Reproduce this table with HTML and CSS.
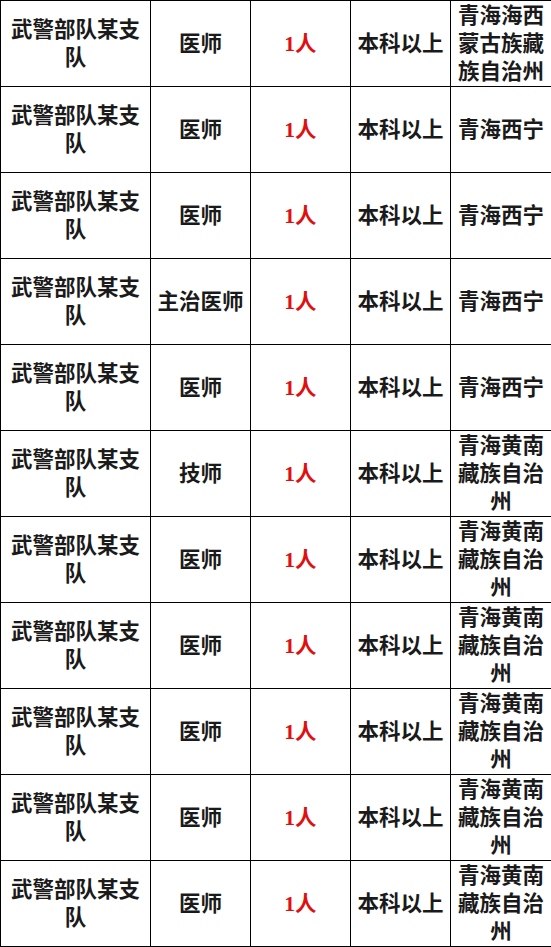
FILE: index.html
```html
<!DOCTYPE html>
<html lang="zh">
<head>
<meta charset="utf-8">
<link rel="stylesheet" href="styles.css">
</head>
<body>
<table class="jobs">
<colgroup><col class="c-unit"><col class="c-post"><col class="c-num"><col class="c-edu"><col class="c-loc"></colgroup>
<tbody>
<tr><td>武警部队某支队</td><td>医师</td><td class="num">1人</td><td>本科以上</td><td>青海海西蒙古族藏族自治州</td></tr>
<tr><td>武警部队某支队</td><td>医师</td><td class="num">1人</td><td>本科以上</td><td>青海西宁</td></tr>
<tr><td>武警部队某支队</td><td>医师</td><td class="num">1人</td><td>本科以上</td><td>青海西宁</td></tr>
<tr><td>武警部队某支队</td><td>主治医师</td><td class="num">1人</td><td>本科以上</td><td>青海西宁</td></tr>
<tr><td>武警部队某支队</td><td>医师</td><td class="num">1人</td><td>本科以上</td><td>青海西宁</td></tr>
<tr><td>武警部队某支队</td><td>技师</td><td class="num">1人</td><td>本科以上</td><td>青海黄南藏族自治州</td></tr>
<tr><td>武警部队某支队</td><td>医师</td><td class="num">1人</td><td>本科以上</td><td>青海黄南藏族自治州</td></tr>
<tr><td>武警部队某支队</td><td>医师</td><td class="num">1人</td><td>本科以上</td><td>青海黄南藏族自治州</td></tr>
<tr><td>武警部队某支队</td><td>医师</td><td class="num">1人</td><td>本科以上</td><td>青海黄南藏族自治州</td></tr>
<tr><td>武警部队某支队</td><td>医师</td><td class="num">1人</td><td>本科以上</td><td>青海黄南藏族自治州</td></tr>
<tr><td>武警部队某支队</td><td>医师</td><td class="num">1人</td><td>本科以上</td><td>青海黄南藏族自治州</td></tr>
</tbody>
</table>
</body>
</html>
```
FILE: styles.css
```css
html, body {
  margin: 0;
  padding: 0;
  background: #fff;
}
.jobs {
  border-collapse: collapse;
  table-layout: fixed;
  width: 551px;
  font-family: "Liberation Serif", "Noto Sans CJK SC", serif;
  font-weight: bold;
  font-size: 21.5px;
  line-height: 28px;
  color: #1a1a1a;
}
.c-unit { width: 150px; }
.c-post { width: 100px; }
.c-num { width: 100px; }
.c-edu { width: 100px; }
.c-loc { width: 101px; }
.jobs tr { height: 86px; }
.jobs td {
  border: 1px solid #000;
  padding: 0 5px;
  text-align: center;
  vertical-align: middle;
  word-break: break-all;
}
.jobs td.num {
  color: #e01010;
}
```
